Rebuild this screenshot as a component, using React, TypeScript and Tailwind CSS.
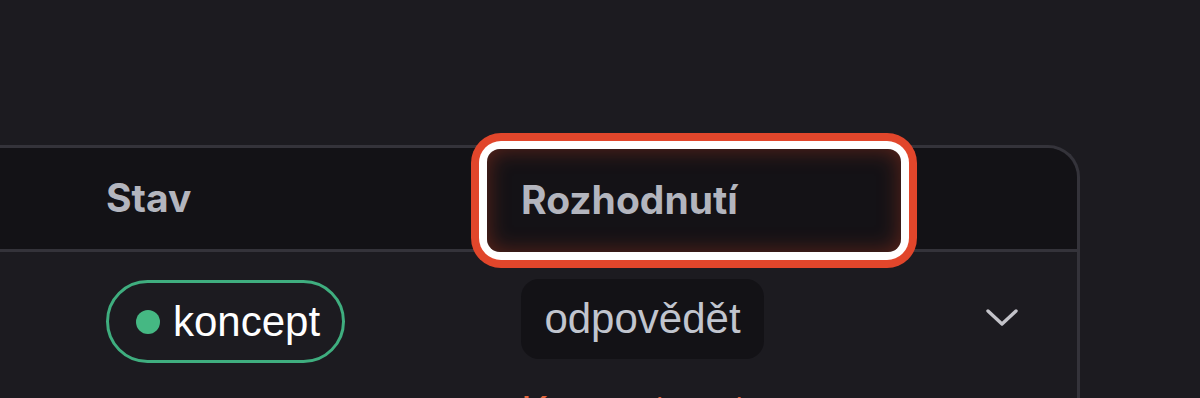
function StatusPill({ label }: { label: string }) {
  return (
    <span className="inline-flex h-[83px] w-[239px] items-center rounded-full border-[3px] border-[#3fae7f] pl-[27px]">
      <span className="h-[24px] w-[24px] rounded-full bg-[#45b883]" />
      <span className="ml-[13px] text-[42px] leading-none text-white">{label}</span>
    </span>
  );
}

function Chevron() {
  return (
    <svg width="34" height="24" viewBox="0 0 34 24" fill="none" className="text-[#c3c3c9]">
      <polyline points="3,4 17,17 31,4" stroke="currentColor" strokeWidth="3.4" strokeLinecap="round" strokeLinejoin="round" />
    </svg>
  );
}

export default function App() {
  return (
    <div
      className="relative h-[398px] w-[1200px] overflow-hidden bg-[#1c1b20]"
      style={{ fontFamily: '"Liberation Sans", Arial, sans-serif' }}
    >
      <div className="mt-[145px] w-[1080px] rounded-tr-[32px] border-t-[3px] border-r-[3px] border-[#34333a]">
        {/* header row */}
        <div className="flex h-[104px] items-center rounded-tr-[30px] border-b-[3px] border-[#34333a] bg-[#131216] pl-[106px] font-['Inter',sans-serif] text-[39px] font-bold text-[#b3b5be]">
          <div className="w-[415px]">Stav</div>
          <div>Rozhodnutí</div>
        </div>
        {/* body row */}
        <div className="flex pl-[106px] pt-[27px]">
          <div className="w-[415px] pt-[1px]">
            <StatusPill label="koncept" />
          </div>
          <div className="flex w-[400px] flex-col">
            <span className="inline-flex h-[80px] w-[243px] items-center justify-center rounded-[18px] bg-[#131216] text-[42px] leading-none text-[#c1c5ce]">
              odpovědět
            </span>
            <span className="mt-[31px] text-[42px] leading-none text-[#e4673d]">Komentovat</span>
          </div>
          <div className="ml-[64px] pt-[28px]">
            <Chevron />
          </div>
        </div>
      </div>

      {/* highlight annotation over the column header */}
      <div className="absolute left-[471px] top-[133px] h-[135px] w-[446px] rounded-[30px] bg-[#e1462b] p-[8px]">
        <div className="h-full w-full rounded-[22px] bg-white p-[8px]">
          <div className="flex h-full w-full items-center rounded-[13px] bg-[#141216] pl-[34px] font-['Inter',sans-serif] text-[39px] font-bold text-[#b3b5be] shadow-[inset_0_0_22px_rgba(190,60,30,0.45)]">
            Rozhodnutí
          </div>
        </div>
      </div>
    </div>
  );
}
